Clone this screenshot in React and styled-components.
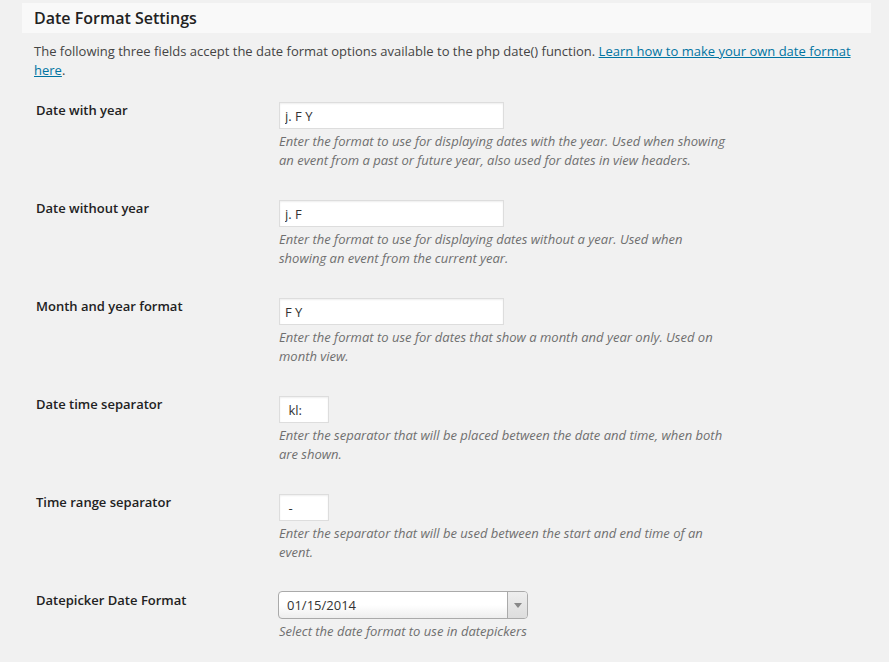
import React from "react";
import styled, { createGlobalStyle } from "styled-components";

const GlobalStyle = createGlobalStyle`
  body {
    margin: 0;
    background: #f1f1f1;
    font-family: "Open Sans", "Liberation Sans", sans-serif;
    font-size: 13px;
    color: #444;
  }
`;

const rows = [
  {
    label: "Date with year",
    value: "j. F Y",
    help: "Enter the format to use for displaying dates with the year. Used when showing an event from a past or future year, also used for dates in view headers.",
  },
  {
    label: "Date without year",
    value: "j. F",
    help: "Enter the format to use for displaying dates without a year. Used when showing an event from the current year.",
  },
  {
    label: "Month and year format",
    value: "F Y",
    help: "Enter the format to use for dates that show a month and year only. Used on month view.",
  },
  {
    label: "Date time separator",
    value: " kl: ",
    small: true,
    help: "Enter the separator that will be placed between the date and time, when both are shown.",
  },
  {
    label: "Time range separator",
    value: " - ",
    small: true,
    help: "Enter the separator that will be used between the start and end time of an event.",
  },
];

const App = () => {
  return (
    <Wrap>
      <GlobalStyle />
      <Title>Date Format Settings</Title>
      <Intro>
        The following three fields accept the date format options available to
        the php date() function.{" "}
        <a href="#">Learn how to make your own date format here</a>.
      </Intro>
      <Table>
        {rows.map((r) => (
          <Row key={r.label}>
            <Label>{r.label}</Label>
            <Field>
              <TextInput type="text" defaultValue={r.value} $small={r.small} />
              <Help>{r.help}</Help>
            </Field>
          </Row>
        ))}
        <Row>
          <Label>Datepicker Date Format</Label>
          <Field>
            <SelectBox>
              <SelectValue>01/15/2014</SelectValue>
              <SelectArrow>
                <svg width="8" height="5" viewBox="0 0 8 5">
                  <path d="M0 0h8L4 5z" fill="#888" />
                </svg>
              </SelectArrow>
            </SelectBox>
            <Help>Select the date format to use in datepickers</Help>
          </Field>
        </Row>
      </Table>
    </Wrap>
  );
};

const Wrap = styled.div`
  padding: 3px 18px 0 22px;
`;

const Title = styled.h3`
  margin: 0;
  height: 30px;
  padding: 0 12px;
  background: #f9f9f9;
  color: #222;
  font-size: 16px;
  font-weight: 600;
  line-height: 30px;
`;

const Intro = styled.p`
  margin: 9px 12px 0;
  line-height: 19px;

  a {
    color: #0074a2;
    text-decoration: underline;
  }
`;

const Table = styled.div`
  margin-top: 7px;
  display: flex;
  flex-direction: column;
`;

const Row = styled.div`
  display: grid;
  grid-template-columns: 243px 1fr;
  align-items: start;
  height: 68px;
  padding: 15px 0 15px 14px;
`;

const Label = styled.div`
  margin-top: -1px;
  line-height: 19px;
  font-weight: 600;
  color: #222;
`;

const Field = styled.div`
  display: flex;
  flex-direction: column;
  align-items: flex-start;
`;

const TextInput = styled.input`
  box-sizing: border-box;
  width: 225px;
  width: ${(p) => (p.$small ? "50px" : "225px")};
  height: 27px;
  margin: 0;
  padding: 2px 5px;
  border: 1px solid #ddd;
  border-radius: 0;
  background: #fff;
  box-shadow: inset 0 1px 2px rgba(0, 0, 0, 0.07);
  color: #333;
  font-family: "Open Sans", "Liberation Sans", sans-serif;
  font-size: 13px;
  white-space: pre;
  outline: none;
`;

const Help = styled.p`
  margin: 3px 0 0;
  max-width: 446px;
  line-height: 19px;
  font-style: italic;
  color: #6f6f6f;
`;

const SelectBox = styled.div`
  box-sizing: border-box;
  display: flex;
  width: 250px;
  height: 28px;
  margin: -1px 0 0 -1px;
  border: 1px solid #aaa;
  border-radius: 4px;
  background: linear-gradient(#fff 0%, #fff 50%, #eee 100%);
  overflow: hidden;
`;

const SelectValue = styled.div`
  flex: 1;
  padding-left: 8px;
  line-height: 26px;
  color: #333;
`;

const SelectArrow = styled.div`
  width: 19px;
  display: flex;
  align-items: center;
  justify-content: center;
  border-left: 1px solid #aaa;
  background: linear-gradient(#eee, #ddd);
`;

export default App;
